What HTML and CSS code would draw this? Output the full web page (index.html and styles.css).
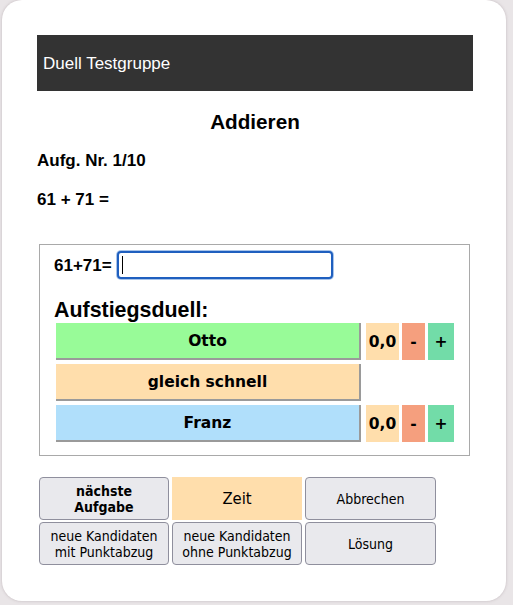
FILE: index.html
```html
<!DOCTYPE html>
<html lang="de">
<head>
<meta charset="utf-8">
<title>Duell Testgruppe</title>
<link rel="stylesheet" href="styles.css">
</head>
<body>
<div class="card">
  <div class="topbar">Duell Testgruppe</div>
  <h1 class="title">Addieren</h1>
  <p class="info">Aufg. Nr. 1/10</p>
  <p class="info task">61 + 71 =</p>
  <div class="duelbox">
    <div class="answer-row">
      <label class="answer-label" for="ans">61+71=</label>
      <span class="input-wrap"><input id="ans" class="answer-input" type="text"></span>
    </div>
    <div class="duel-title">Aufstiegsduell:</div>
    <div class="duel-grid">
      <div class="pbtn green">Otto</div>
      <div class="score">0,0</div>
      <div class="minus">-</div>
      <div class="plus">+</div>
      <div class="pbtn tie">gleich schnell</div>
      <div class="empty"></div>
      <div class="pbtn blue">Franz</div>
      <div class="score">0,0</div>
      <div class="minus">-</div>
      <div class="plus">+</div>
    </div>
  </div>
  <div class="controls">
    <button class="btn bold">nächste<br>Aufgabe</button>
    <button class="btn time">Zeit</button>
    <button class="btn">Abbrechen</button>
    <button class="btn">neue Kandidaten<br>mit Punktabzug</button>
    <button class="btn">neue Kandidaten<br>ohne Punktabzug</button>
    <button class="btn">Lösung</button>
  </div>
</div>
</body>
</html>
```
FILE: styles.css
```css
html, body {
  margin: 0;
  padding: 0;
}
body {
  background: #e9e5e7;
  font-family: "Liberation Sans", Arial, sans-serif;
  color: #000;
  width: 513px;
  height: 605px;
  overflow: hidden;
}
.card {
  margin: 0 7px 0 2px;
  height: 601px;
  box-sizing: border-box;
  background: #fff;
  border-radius: 20px;
  box-shadow: 0 0 3px rgba(120, 100, 110, 0.35);
  padding: 35px 33px 0 35px;
}
.topbar {
  background: #333;
  color: #fff;
  height: 56px;
  display: flex;
  align-items: center;
  padding-left: 6px;
  font-size: 17px;
  padding-top: 1px;
  box-sizing: border-box;
}
.title {
  margin: 19px 0 0;
  text-align: center;
  font-size: 20.7px;
  line-height: 24px;
  font-weight: bold;
}
.info {
  margin: 18px 0 0;
  font-size: 17px;
  line-height: 18px;
  font-weight: bold;
}
.task {
  margin-top: 21px;
}
.duelbox {
  margin: 35px 3px 0 2px;
  border: 1px solid #a9a9a9;
  padding: 6px 15px 14px 14px;
  height: 212px;
  box-sizing: border-box;
}
.answer-row {
  display: flex;
  align-items: center;
  gap: 5px;
}
.answer-label {
  font-size: 17px;
  font-weight: bold;
  padding-top: 1px;
}
.input-wrap {
  position: relative;
  display: inline-block;
}
.input-wrap::after {
  content: "";
  position: absolute;
  left: 5px;
  top: 5px;
  width: 1px;
  height: 18px;
  background: #000;
}
.answer-input {
  display: block;
  width: 216px;
  height: 28px;
  box-sizing: border-box;
  border: 2px solid #1f5fbf;
  border-radius: 4px;
  box-shadow: 0 0 0 1px #a8c4ea;
  outline: none;
  margin: 0;
  padding: 0 4px;
  font-size: 14px;
}
.duel-title {
  margin-top: 20px;
  font-size: 21.4px;
  font-weight: bold;
  line-height: 22px;
  height: 24px;
}
.duel-grid {
  margin-left: 2px;
  display: grid;
  grid-template-columns: 305px 38px 26px 29px;
  grid-auto-rows: 37px;
  row-gap: 4px;
  font-family: "DejaVu Sans", sans-serif;
  font-weight: bold;
  font-size: 15.5px;
}
.pbtn {
  display: flex;
  align-items: center;
  justify-content: center;
  border-right: 2px solid #9a9a9a;
  border-bottom: 2px solid #9a9a9a;
  box-sizing: border-box;
  padding-top: 1px;
}
.green { background: #98fb98; }
.tie { background: #ffdeac; }
.blue { background: #b0dffb; }
.empty { grid-column: span 3; }
.score, .minus, .plus {
  display: flex;
  align-items: center;
  justify-content: center;
}
.score { background: #ffdeac; margin-left: 5px; }
.minus { background: #f59f7e; margin-left: 3px; }
.plus { background: #72dca8; margin-left: 3px; }
.controls {
  margin: 21px 0 0 2px;
  display: grid;
  grid-template-columns: 130px 130px 131px;
  grid-auto-rows: 43px;
  column-gap: 3px;
  row-gap: 2px;
}
.btn {
  margin: 0;
  padding: 0 2px;
  font-family: "DejaVu Sans Condensed", "DejaVu Sans", sans-serif;
  font-size: 14px;
  line-height: 16px;
  color: #000;
  background: #e9e9ed;
  border: 1px solid #8f8f9d;
  border-radius: 4px;
}
.btn.bold { font-weight: bold; }
.btn.time {
  background: #ffdeac;
  border-color: #ffdeac;
  border-radius: 0;
  font-size: 16.5px;
}
```
